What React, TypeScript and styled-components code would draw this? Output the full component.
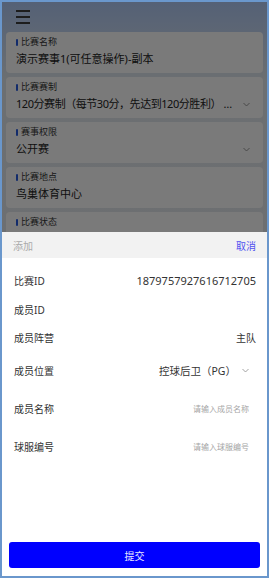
import React from "react";
import styled, { createGlobalStyle } from "styled-components";

const Global = createGlobalStyle`
  html, body { margin: 0; padding: 0; }
  body { font-family: "Noto Sans", "Noto Sans CJK SC", sans-serif; }
  * { box-sizing: border-box; }
`;

const Frame = styled.div`
  position: relative;
  width: 269px;
  height: 578px;
  border: 2px solid #6a97cc;
  overflow: hidden;
  background: linear-gradient(180deg, #a9c2ec 0px, #d9dfe4 80px, #dcdfe2 100%);
  font-family: "Noto Sans", "Noto Sans CJK SC", sans-serif;
`;

const TopBar = styled.div`
  height: 30px;
  padding-left: 14px;
  display: flex;
  align-items: center;
`;

const Burger = styled.div`
  width: 14px;
  display: flex;
  flex-direction: column;
  gap: 4.5px;
  & > span {
    display: block;
    height: 1.5px;
    background: #3a3a3a;
  }
`;

const Cards = styled.div`
  display: flex;
  flex-direction: column;
  gap: 4px;
  padding: 0 4px;
`;

const Card = styled.div`
  height: 41px;
  background: #f5f5f5;
  border-radius: 4px;
  padding: 4px 13px 4px 10px;
  display: flex;
  flex-direction: column;
  gap: 3px;
`;

const Label = styled.div`
  display: flex;
  align-items: center;
  gap: 3px;
  font-size: 9px;
  line-height: 12px;
  color: #333;
  &::before {
    content: "";
    width: 2px;
    height: 7px;
    background: #2457d6;
    border-radius: 1px;
  }
`;

const ValueRow = styled.div`
  display: flex;
  align-items: center;
  gap: 8px;
  font-size: 11px;
  line-height: 16px;
  color: #222;
`;

const ValueText = styled.span<{ $tight?: boolean }>`
  flex: 1;
  min-width: 0;
  white-space: nowrap;
  overflow: hidden;
  text-overflow: ellipsis;
  letter-spacing: ${(p) => (p.$tight ? "-0.45px" : "0")};
`;

const Chevron = ({ color = "#888" }: { color?: string }) => (
  <svg width="7" height="5" viewBox="0 0 7 5" style={{ flexShrink: 0 }}>
    <path d="M0.5 1 L3.5 4 L6.5 1" fill="none" stroke={color} strokeWidth="0.9" />
  </svg>
);

const Mask = styled.div`
  position: absolute;
  inset: 0;
  background: rgba(0, 0, 0, 0.5);
`;

const Sheet = styled.div`
  position: absolute;
  left: 0;
  right: 0;
  top: 230px;
  bottom: 0;
  background: #fff;
  display: flex;
  flex-direction: column;
`;

const SheetHeader = styled.div`
  height: 26px;
  flex-shrink: 0;
  background: #f2f2f2;
  display: flex;
  align-items: center;
  justify-content: space-between;
  padding: 0 11px;
  font-size: 10px;
`;

const HeaderTitle = styled.span`
  color: #aaa;
`;

const HeaderAction = styled.span`
  color: #5050f0;
`;

const Rows = styled.div`
  padding: 8px 11px 0 12px;
  display: flex;
  flex-direction: column;
`;

const Row = styled.div<{ $h: number }>`
  height: ${(p) => p.$h}px;
  display: flex;
  align-items: center;
  justify-content: space-between;
`;

const RowLabel = styled.span`
  font-size: 10px;
  color: #333;
`;

const RowValue = styled.span<{ $size?: number; $muted?: boolean; $pr?: number }>`
  display: flex;
  align-items: center;
  gap: 6px;
  font-size: ${(p) => p.$size ?? 10}px;
  color: ${(p) => (p.$muted ? "#a6a6a6" : "#333")};
  padding-right: ${(p) => p.$pr ?? 0}px;
`;

const Footer = styled.div`
  margin-top: auto;
  padding: 0 7px 8px;
`;

const Submit = styled.button`
  width: 100%;
  height: 26px;
  border: none;
  border-radius: 3px;
  background: #0000ff;
  color: #e8e8ff;
  font-size: 10px;
  font-family: "Noto Sans", "Noto Sans CJK SC", sans-serif;
`;

export default function App() {
  return (
    <>
      <Global />
      <Frame>
        <TopBar>
          <Burger>
            <span />
            <span />
            <span />
          </Burger>
        </TopBar>
        <Cards>
          <Card>
            <Label>比赛名称</Label>
            <ValueRow>
              <ValueText>演示赛事1(可任意操作)-副本</ValueText>
            </ValueRow>
          </Card>
          <Card>
            <Label>比赛赛制</Label>
            <ValueRow>
              <ValueText $tight>120分赛制（每节30分，先达到120分胜利） 先达到120分胜利</ValueText>
              <Chevron />
            </ValueRow>
          </Card>
          <Card>
            <Label>赛事权限</Label>
            <ValueRow>
              <ValueText>公开赛</ValueText>
              <Chevron />
            </ValueRow>
          </Card>
          <Card>
            <Label>比赛地点</Label>
            <ValueRow>
              <ValueText>鸟巢体育中心</ValueText>
            </ValueRow>
          </Card>
          <Card>
            <Label>比赛状态</Label>
          </Card>
        </Cards>
        <Mask />
        <Sheet>
          <SheetHeader>
            <HeaderTitle>添加</HeaderTitle>
            <HeaderAction>取消</HeaderAction>
          </SheetHeader>
          <Rows>
            <Row $h={28}>
              <RowLabel>比赛ID</RowLabel>
              <RowValue $size={11}>1879757927616712705</RowValue>
            </Row>
            <Row $h={30}>
              <RowLabel>成员ID</RowLabel>
              <RowValue />
            </Row>
            <Row $h={27}>
              <RowLabel>成员阵营</RowLabel>
              <RowValue>主队</RowValue>
            </Row>
            <Row $h={38}>
              <RowLabel>成员位置</RowLabel>
              <RowValue $size={10.5} $pr={7}>
                控球后卫（PG）
                <Chevron color="#999" />
              </RowValue>
            </Row>
            <Row $h={38}>
              <RowLabel>成员名称</RowLabel>
              <RowValue $size={8} $muted $pr={7}>请输入成员名称</RowValue>
            </Row>
            <Row $h={38}>
              <RowLabel>球服编号</RowLabel>
              <RowValue $size={8} $muted $pr={7}>请输入球服编号</RowValue>
            </Row>
          </Rows>
          <Footer>
            <Submit>提交</Submit>
          </Footer>
        </Sheet>
      </Frame>
    </>
  );
}
